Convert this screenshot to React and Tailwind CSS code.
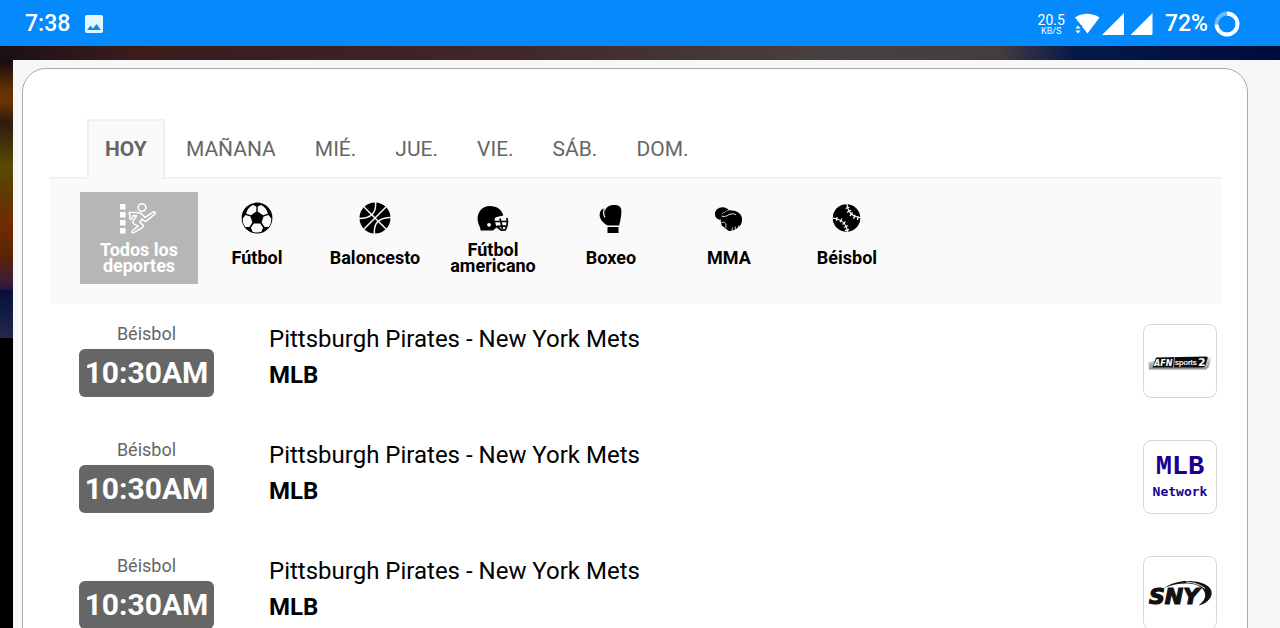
import React from 'react';
import { MdImage } from 'react-icons/md';

const days = ['HOY', 'MAÑANA', 'MIÉ.', 'JUE.', 'VIE.', 'SÁB.', 'DOM.'];

const AllSportsIcon = () => (
  <svg viewBox="0 0 40 32" className="h-8 w-10" fill="none" aria-hidden="true">
    <path fill="#fff" d="M1 2h5.500v5.500H1zM1 10h5.500v5.500H1zM1 18h5.500v5.500H1zM1 26h5.500v5.500H1z" />
    <circle cx="23" cy="5.500" r="3.800" stroke="#fff" strokeWidth="1.500" />
    <path
      d="M11 12.500c-1.600-.8-.8-2.500.8-2.300l8 .6c1.500.2 2.600.8 3.700 2l2.500 2.700 8-5.300c1.600-1 3 .6 1.800 2l-8.300 6.600c-1 .7-2 .6-2.800-.2l-1.600-1.600-2.300 3.500 2.700 2.200c1 .8 1.100 1.800.1 2.600l-8.700 5.300c-1.800.8-2.700-1-1.300-2.100l5.600-4.300-4.300-2.400c-1.200-.8-1.400-1.800-.6-3l3.200-5-3.300-.2-1.300 3c-.7 1.200-2.500.6-2-1z"
      stroke="#fff"
      strokeWidth="1.500"
      strokeLinejoin="round"
    />
  </svg>
);

const SoccerIcon = () => (
  <svg viewBox="0 0 32 32" className="size-8" aria-hidden="true">
    <circle cx="16" cy="16" r="15.400" />
    <g fill="#fafafa">
      <path d="M15.300 4.500v5l-5.300 3.800-4.800-1.600C5.800 8.200 8.500 4.500 12 3z" />
      <path d="M16.700 4.500v5l5.300 3.800 4.800-1.600C26.200 8.200 23.500 4.500 20 3z" />
      <path d="M1.800 16.500l2.700-3.500 4.900 1.600 2 6-3 4.400-4 .1C2.500 23 1.500 19.500 1.800 16.500z" />
      <path d="M30.200 16.500l-2.700-3.500-4.900 1.600-2 6 3 4.400 4 .1c1.900-2.100 2.900-5.600 2.600-8.600z" />
      <path d="M12.800 21.600h6.400l2.900 4.200-1.700 4c-2.600 1-6.200 1-8.800 0l-1.700-4z" />
    </g>
  </svg>
);

const BasketballIcon = () => (
  <svg viewBox="0 0 32 32" className="size-8" aria-hidden="true">
    <circle cx="16" cy="16" r="15.500" />
    <g fill="none" stroke="#fafafa" strokeWidth="1.500">
      <path d="M5 5l22 22M27 5L5 27" />
      <path d="M16.500 0C17.500 10 13 16.500 0 16.500" />
      <path d="M32 15.500C19 15.500 14.500 22 15.500 32" />
    </g>
  </svg>
);

const HelmetIcon = () => (
  <svg viewBox="0 0 32 32" className="size-8" aria-hidden="true">
    <path d="M3.500 28.500c.4-3-3-6.500-2.900-12C.8 9 6 4 12.500 4 20.500 4 25 8 26.300 13.500l-6.600 1.600c-1.700.5-2.400 1.600-2 3.100l1.800 7.300-3.500 3z" />
    <circle cx="12" cy="22.800" r="1.900" fill="#fafafa" />
    <path
      d="M18 19.500h12M19.500 24.300l9.500-.3M29.800 16c1 3.500.1 9-1.600 12l-3.700.2-5.300-4M23 16.500l2.500 10.500"
      fill="none"
      stroke="#000"
      strokeWidth="1.700"
      strokeLinejoin="round"
    />
  </svg>
);

const GloveIcon = () => (
  <svg viewBox="0 0 32 32" className="size-8" aria-hidden="true">
    <path d="M10 9.200C11 4.500 15 3 19.500 3c5 0 7 2.500 6.900 6.500-.1 5-.9 8.500-2.200 14H13C8 21.500 4.500 17 4.600 12.500c.1-3.500 2-5.700 5-6z" />
    <path d="M9.400 6.500c-1.300 3-.9 6 .5 9" fill="none" stroke="#fafafa" strokeWidth="1.200" />
    <path d="M12.500 25h11v6h-11z" />
  </svg>
);

const MmaIcon = () => (
  <svg viewBox="0 0 32 32" className="size-8" aria-hidden="true">
    <path d="M2 13C1.500 8 5.500 5 10 5.200c2 0 4 1 5.500 2.300L9 11.500 7.500 17.900C4 17.300 2.300 15.500 2 13z" />
    <path d="M8.500 12.500l6-4c3-.8 8 .1 10.800 2 3.200 2.200 4.300 5.500 3.700 8.500-.5 3.500-2.500 5.800-5.200 7.500-2.500 1.600-6 2.900-8.300 2.200l-6.800-5.300L7.700 19z" />
    <g fill="none" stroke="#fafafa">
      <path d="M9 14.300c4 .8 5.500-1.100 8-2s4-.5 6 .5" strokeWidth=".9" />
      <path d="M8.500 20.500c3-.8 4.500.5 4.500 2.500l-.3 3" strokeWidth=".8" />
      <path d="M19.500 25.500l-.6 3.500M22.500 24.500l-.4 3.500M25.500 23.500l-.3 3" strokeWidth=".8" />
    </g>
  </svg>
);

const BaseballIcon = () => (
  <svg viewBox="0 0 32 32" className="size-8" aria-hidden="true">
    <circle cx="15.500" cy="16" r="13.800" />
    <g fill="none" stroke="#fafafa">
      <path d="M16 1.500c.5 8 5 13.500 14.500 14.300M1.500 16.200C10 17 16 22 16.500 30.500" strokeWidth="1.200" />
      <path
        d="M14.500 6.500l4-1.500M16 10.500l4-2.500M19 14l2.500-3.500M22.500 16.800l1.500-4M26.500 18l.5-4M5.500 19l.5-4M9 20.200l2-3.700M11.500 22.500l3-3M13 25.500l4-2M14 28.500l4-1"
        strokeWidth="1.300"
      />
    </g>
  </svg>
);

const sports = [
  { name: 'Todos los deportes', Icon: AllSportsIcon, active: true },
  { name: 'Fútbol', Icon: SoccerIcon },
  { name: 'Baloncesto', Icon: BasketballIcon },
  { name: 'Fútbol americano', Icon: HelmetIcon },
  { name: 'Boxeo', Icon: GloveIcon },
  { name: 'MMA', Icon: MmaIcon },
  { name: 'Béisbol', Icon: BaseballIcon },
];

const AfnLogo = () => (
  <svg viewBox="0 0 72 72" className="w-full" role="img" aria-label="AFN sports 2">
    <defs>
      <linearGradient id="afn" x1="0" y1="0" x2="0" y2="1">
        <stop offset="0" stopColor="#e8e8e8" />
        <stop offset="1" stopColor="#8c8c8c" />
      </linearGradient>
    </defs>
    <path d="M4.500 37.500l5-1.500 53-4 5 .5-2.500 9.500-3 2.500H5z" fill="url(#afn)" />
    <path d="M12 32.500L62 31.500c1.500 0 2 .8 1.600 2l-2.300 7c-.5 1.300-1.200 2-2.600 2H8.500z" fill="#0c0c0c" />
    <path d="M30.500 32.500l-1 10" stroke="#aaa" strokeWidth="1" />
    <text x="10" y="41" fill="#fff" fontSize="8" fontWeight="700" fontStyle="italic" fontFamily="DejaVu Sans, sans-serif">AFN</text>
    <text x="31" y="40" fill="#fff" fontSize="8" stroke="#fff" strokeWidth=".2" fontFamily="Liberation Sans, sans-serif">sports</text>
    <text x="54" y="41" fill="#fff" fontSize="11" fontWeight="700" fontFamily="DejaVu Sans, sans-serif">2</text>
  </svg>
);

const MlbLogo = () => (
  <span className="flex flex-col items-center text-[#1a0090]">
    <span className="font-['Liberation_Mono',monospace] text-[27px] leading-[30px] font-bold">MLB</span>
    <span className="font-['DejaVu_Sans_Mono',monospace] text-[13px] leading-5 font-bold">Network</span>
  </span>
);

const SnyLogo = () => (
  <svg viewBox="0 0 72 72" className="w-full" role="img" aria-label="SNY">
    <text x="5" y="47" fill="#111" stroke="#111" strokeWidth="1.200" fontSize="22" fontWeight="700" fontStyle="italic" fontFamily="DejaVu Sans, sans-serif">SNY</text>
    <path
      d="M20 31C28 26 35 24 43 24c10 0 18 2 22.500 6.500 3.500 4.500 2.500 9-1 12.500-2 2.500-5 4.500-10 5.500 4-3.500 6.500-6 6.700-10 .2-5-3.700-8.500-9.200-10.700C43 25.500 32 26 20 31z"
      fill="#111"
    />
    <path d="M42 25c8 .5 14 2.500 19 6.500" fill="none" stroke="#fff" strokeWidth=".9" />
  </svg>
);

const games = [
  { id: 1, Logo: AfnLogo },
  { id: 2, Logo: MlbLogo },
  { id: 3, Logo: SnyLogo },
];

const StatusBar = () => (
  <header className="flex h-[46px] shrink-0 items-center justify-between bg-[#048afc] pt-0.5 pr-10 pl-[25px] text-white">
    <div className="flex items-center gap-3">
      <span className="text-[23px] font-medium">7:38</span>
      <MdImage className="size-6 text-[#e6f6ff]" />
    </div>
    <div className="flex items-center">
      <div className="flex flex-col items-center pr-2">
        <span className="text-[14px] leading-[14px]">20.5</span>
        <span className="text-[9px] leading-[9px]">KB/S</span>
      </div>
      <svg viewBox="0 0 80 24" className="mr-3 h-6 w-20" fill="#fff" aria-hidden="true">
        <path d="M2 5.500C9 .5 19 .5 26.500 5.500L14.500 21.500z" />
        <path d="M1 13h8v10H1z" fill="#048afc" />
        <path d="M2.500 16.500L5 13.500l2.500 3zM2.500 18.500L5 21.500l2.500-3z" />
        <path d="M29 23L51 1v20.500c0 1-.5 1.500-1.500 1.500zM57.500 23L79.500 1v20.500c0 1-.5 1.500-1.500 1.500z" />
      </svg>
      <span className="text-[23px] font-medium">72%</span>
      <svg viewBox="0 0 26 26" className="ml-1.5 size-[26px]" fill="none" strokeWidth="3.800" aria-hidden="true">
        <circle cx="13" cy="13" r="10.500" stroke="#69bcff" />
        <circle cx="13" cy="13" r="10.500" stroke="#fff" pathLength="100" strokeDasharray="74 26" transform="rotate(-90 13 13)" />
      </svg>
    </div>
  </header>
);

const GameRow = ({ Logo }) => (
  <li className="flex h-[116px] items-start pr-1 pl-[30px]">
    <div className="flex w-[135px] shrink-0 flex-col text-center">
      <span className="mb-0.5 text-[18px] leading-[26px] text-[#666]">Béisbol</span>
      <time className="rounded-md bg-[#666] text-[30px] leading-[48px] font-bold text-white">10:30AM</time>
    </div>
    <div className="grow pl-[55px] text-2xl leading-9 text-black">
      <p>Pittsburgh Pirates - New York Mets</p>
      <p className="font-bold">MLB</p>
    </div>
    <div className="mt-[3px] flex size-[74px] shrink-0 items-center justify-center rounded-lg border border-[#d6d6d6]">
      <Logo />
    </div>
  </li>
);

const App = () => {
  return (
    <div className="flex h-screen flex-col overflow-hidden font-[Roboto,sans-serif]">
      <StatusBar />
      <div className="flex grow flex-col overflow-hidden bg-black">
        <div className="h-3.5 shrink-0 bg-[linear-gradient(90deg,#1a1016_0%,#3a1c1c_10%,#3c2022_25%,#40282c_40%,#48403f_64%,#443c40_78%,#06184a_84%,#000c3c_100%)]" />
        <div className="flex grow overflow-hidden">
          <div className="w-[13px] shrink-0">
            <div className="h-[230px] bg-[linear-gradient(180deg,#140c16_0%,#643000_13%,#6a3400_18%,#2c1a10_27%,#5a4a00_46%,#5c3c00_56%,#702c00_72%,#5c2400_84%,#3c1c34_96%,#20183c_100%)]" />
            <div className="h-12 bg-linear-to-b from-[#06103a] to-[#222850]" />
          </div>
          <main className="grow overflow-hidden bg-[#f7f7f7] pt-2 pr-8 pl-[9px]">
            <section className="min-h-screen rounded-3xl border border-[#aaa] bg-white px-[26px] pt-[50px]">
              <nav className="flex gap-[3px] border-b-2 border-[#f0f0f0] pl-[38px]">
                {days.map((day, i) => (
                  <button
                    key={day}
                    type="button"
                    className={
                      i === 0
                        ? '-mb-0.5 border-2 border-b-0 border-[#f0f0f0] bg-[#fafafa] px-4 pb-0.5 text-[21px] leading-[56px] font-bold text-[#666]'
                        : 'border-2 border-b-0 border-transparent px-4 text-[21px] leading-[56px] text-[#666]'
                    }
                  >
                    {day}
                  </button>
                ))}
              </nav>
              <div className="flex bg-[#fafafa] pt-[13px] pb-5 pl-[31px]">
                {sports.map(({ name, Icon, active }) => (
                  <button
                    key={name}
                    type="button"
                    className={
                      active
                        ? 'flex h-[92px] w-[118px] flex-col items-center bg-[#b6b6b6] px-3 pt-2.5 text-white'
                        : 'flex h-[92px] w-[118px] flex-col items-center px-3 pt-2.5 text-black'
                    }
                  >
                    <Icon />
                    <span className="mt-2 flex h-8 items-center text-[18px] leading-4 font-bold">{name}</span>
                  </button>
                ))}
              </div>
              <ul className="pt-[17px]">
                {games.map((game) => (
                  <GameRow key={game.id} Logo={game.Logo} />
                ))}
              </ul>
            </section>
          </main>
        </div>
      </div>
    </div>
  );
};

export default App;
